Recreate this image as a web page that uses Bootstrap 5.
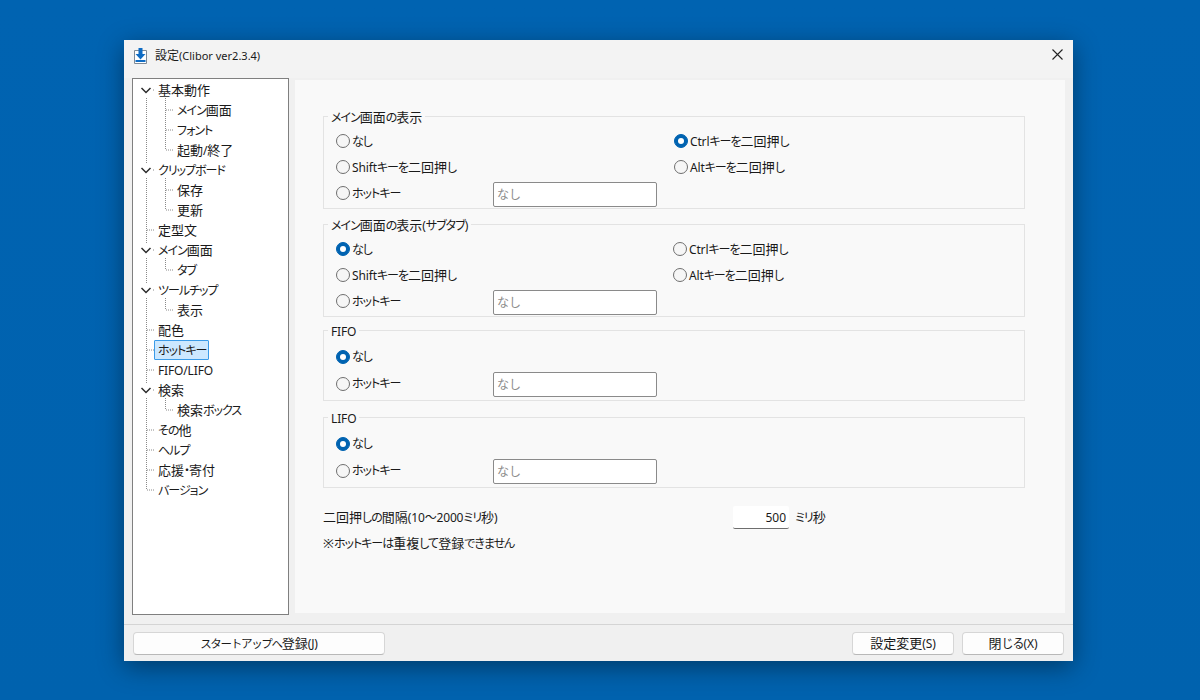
<!DOCTYPE html>
<html lang="ja">
<head>
<meta charset="utf-8">
<title>設定(Clibor ver2.3.4)</title>
<link href="https://cdn.jsdelivr.net/npm/bootstrap@5.3.0/dist/css/bootstrap.min.css" rel="stylesheet">
<style>
html,body{height:100%;}
body{margin:0;background:linear-gradient(180deg,#0063b1 0%,#0062ae 100%);font-family:"Noto Sans","Noto Sans CJK JP",sans-serif;font-size:13px;line-height:18px;color:#1a1a1a;font-feature-settings:"palt";overflow:hidden;padding:40px 127px 39px 124px;}
.kn{font-size:12px;letter-spacing:-1px;}
.lt{font-size:12px;letter-spacing:-.15px;}
.app-win{width:949px;height:621px;background:#f0f0f0;box-shadow:0 6px 24px rgba(0,0,0,.4);}
.app-title{height:38px;background:#f3f3f3;padding:0 10px 7px 9px;font-size:12px;}
.app-title .app-ico{margin-right:7px;}
.app-title .lt{font-size:11px;letter-spacing:0;}
.app-title .app-close{margin-left:auto;margin-bottom:2px;}
.app-main{height:537px;padding:0 8px;gap:6px;}
.app-tree{width:157px;height:537px;flex:none;background:#fff;border:1px solid #7f7f7f;padding-top:1px;position:relative;}
.tree-lines{position:absolute;left:0;top:0;pointer-events:none;}
.tree-row{height:20px;line-height:20px;padding-left:25px;white-space:nowrap;}
.tree-row.lvl2{padding-left:44px;}
.tree-sel{display:inline-block;height:20px;width:55px;line-height:18px;margin-left:-4px;padding:0 3px;background:#cce8ff;border:1px solid #3a9be8;border-radius:1px;}
.app-panel{flex:1;margin:2px 0;background:#f9f9f9;padding:26px 40px 0 28px;}
.grp{border:1px solid #e3e3e3;padding:1px 12px 2px;}
.grp legend{float:none;width:auto;font-size:13px;line-height:18px;margin:0 0 0 -8px;padding:2px 3px 0;}
.grp-a{margin-top:5px;}
.grp-b{margin-top:3px;padding-top:2px;padding-bottom:3px;}
.grp-c{margin-top:6px;padding-top:2px;padding-bottom:3px;}
.opt-row{height:26px;}
.grp-b .opt-row,.grp-c .opt-row{height:27px;}
.grp-b .key-box,.grp-c .key-box{margin-top:2px;}
.opt-left{width:338px;flex:none;}
.grp-a .opt-left{width:337px;}
.opt-label{width:157px;flex:none;}
.opt-pick{gap:2px;}
.opt-pick .form-check-input{width:14px;height:14px;margin:0;background-color:#f6f6f6;border:1px solid #6f6f6f;flex:none;}
.opt-pick .form-check-input:checked{background-color:#0063b1;border-color:#0063b1;}
.opt-pick .form-check-label{white-space:nowrap;}
.key-box{width:164px;height:25px;min-height:25px;margin-top:3px;border:1px solid #8a8a8a;border-radius:2px;padding:0 3px;font-size:12px;line-height:23px;background:#fff;}
.key-box::placeholder{color:#8c8c8c;}
.num-line{margin-top:18px;height:23px;}
.num-text{width:410px;flex:none;}
.num-box{width:56px;height:23px;border:0;border-bottom:1px solid #6e6e6e;border-radius:2px;background:#fff;text-align:right;padding:0 3px;font-size:12px;color:#1a1a1a;margin-right:6px;}
.note-line{margin-top:5px;}
.app-foot{height:37px;margin-top:9px;border-top:1px solid #d4d4d4;padding:7px 9px 0;}
.foot-btn{height:23px;background:#fdfdfd;border:1px solid #d6d6d6;border-bottom-color:#b8b8b8;border-radius:4px;padding:0;font-size:13px;line-height:20px;color:#1a1a1a;}
.foot-wide{width:252px;}
.foot-wide .kn{font-size:11.5px;letter-spacing:-1.3px;}
.foot-mid{width:102px;margin-left:auto;}
.foot-end{width:102px;margin-left:8px;}
</style>
</head>
<body>
<div class="app-win d-flex flex-column">
  <div class="app-title d-flex align-items-center">
    <svg class="app-ico" width="15" height="16" viewBox="0 0 15 16"><path d="M1.500 2.500h12v13h-12z" fill="#fff" stroke="#7f8a96"/><path d="M5.500 0h4v6h3L7.500 11.500 2.500 6h3z" fill="#0f6cc4"/><path d="M2.500 13h10" stroke="#0f6cc4" stroke-width="2"/></svg>
    <span>設定<span class="lt">(Clibor ver2.3.4)</span></span>
    <svg class="app-close" width="11" height="11" viewBox="0 0 11 11"><path d="M.5.5l10 10M10.500.5l-10 10" stroke="#222" stroke-width="1.100" fill="none"/></svg>
  </div>
  <div class="app-main d-flex">
    <div class="app-tree">
      <svg class="tree-lines" width="155" height="535" viewBox="0 0 155 535">
        <g stroke="#8a8a8a" stroke-dasharray="1 1" fill="none">
          <path d="M13.500 19V85M13.500 99V165M13.500 179V205M13.500 219V305M13.500 319V411"/>
          <path d="M32.500 19V71M32.500 99V131M32.500 179V191M32.500 219V231M32.500 319V331"/>
          <path d="M33 31H40M33 51H40M33 71H40M33 111H40M33 131H40M33 191H40M33 231H40M33 331H40"/>
          <path d="M14 151H21M14 251H21M14 271H21M14 291H21M14 351H21M14 371H21M14 391H21M14 411H21"/>
          <path d="M20 11H22M20 91H22M20 171H22M20 211H22M20 311H22"/>
        </g>
        <g stroke="#2b2b2b" stroke-width="1.500" fill="none">
          <path d="M8.500 9l4.500 4.500L17.500 9"/><path d="M8.500 89l4.500 4.500L17.500 89"/><path d="M8.500 169l4.500 4.500L17.500 169"/><path d="M8.500 209l4.500 4.500L17.500 209"/><path d="M8.500 309l4.500 4.500L17.500 309"/>
        </g>
      </svg>
      <div class="tree-row">基本動作</div>
      <div class="tree-row lvl2"><span class="kn">メイン</span>画面</div>
      <div class="tree-row lvl2"><span class="kn">フォント</span></div>
      <div class="tree-row lvl2">起動<span class="lt">/</span>終了</div>
      <div class="tree-row"><span class="kn">クリップボード</span></div>
      <div class="tree-row lvl2">保存</div>
      <div class="tree-row lvl2">更新</div>
      <div class="tree-row">定型文</div>
      <div class="tree-row"><span class="kn">メイン</span>画面</div>
      <div class="tree-row lvl2"><span class="kn">タブ</span></div>
      <div class="tree-row"><span class="kn">ツールチップ</span></div>
      <div class="tree-row lvl2">表示</div>
      <div class="tree-row">配色</div>
      <div class="tree-row"><span class="tree-sel"><span class="kn">ホットキー</span></span></div>
      <div class="tree-row"><span class="lt">FIFO/LIFO</span></div>
      <div class="tree-row">検索</div>
      <div class="tree-row lvl2">検索<span class="kn">ボックス</span></div>
      <div class="tree-row"><span class="kn">その</span>他</div>
      <div class="tree-row"><span class="kn">ヘルプ</span></div>
      <div class="tree-row">応援<span class="kn">・</span>寄付</div>
      <div class="tree-row"><span class="kn">バージョン</span></div>
    </div>
    <div class="app-panel">
      <fieldset class="grp">
        <legend><span class="kn">メイン</span>画面<span class="kn">の</span>表示</legend>
        <div class="opt-row d-flex align-items-center">
          <div class="opt-left"><div class="opt-pick d-flex align-items-center"><input class="form-check-input" type="radio" name="g1"><label class="form-check-label"><span class="kn">なし</span></label></div></div>
          <div class="opt-pick d-flex align-items-center"><input class="form-check-input" type="radio" name="g1" checked><label class="form-check-label"><span class="lt">Ctrl</span><span class="kn">キーを</span>二回押<span class="kn">し</span></label></div>
        </div>
        <div class="opt-row d-flex align-items-center">
          <div class="opt-left"><div class="opt-pick d-flex align-items-center"><input class="form-check-input" type="radio" name="g1"><label class="form-check-label"><span class="lt">Shift</span><span class="kn">キーを</span>二回押<span class="kn">し</span></label></div></div>
          <div class="opt-pick d-flex align-items-center"><input class="form-check-input" type="radio" name="g1"><label class="form-check-label"><span class="lt">Alt</span><span class="kn">キーを</span>二回押<span class="kn">し</span></label></div>
        </div>
        <div class="opt-row d-flex align-items-center">
          <div class="opt-label opt-pick d-flex align-items-center"><input class="form-check-input" type="radio" name="g1"><label class="form-check-label"><span class="kn">ホットキー</span></label></div>
          <input class="key-box form-control" placeholder="なし">
        </div>
      </fieldset>
      <fieldset class="grp grp-a">
        <legend><span class="kn">メイン</span>画面<span class="kn">の</span>表示<span class="lt">(</span><span class="kn">サブタブ</span><span class="lt">)</span></legend>
        <div class="opt-row d-flex align-items-center">
          <div class="opt-left"><div class="opt-pick d-flex align-items-center"><input class="form-check-input" type="radio" name="g2" checked><label class="form-check-label"><span class="kn">なし</span></label></div></div>
          <div class="opt-pick d-flex align-items-center"><input class="form-check-input" type="radio" name="g2"><label class="form-check-label"><span class="lt">Ctrl</span><span class="kn">キーを</span>二回押<span class="kn">し</span></label></div>
        </div>
        <div class="opt-row d-flex align-items-center">
          <div class="opt-left"><div class="opt-pick d-flex align-items-center"><input class="form-check-input" type="radio" name="g2"><label class="form-check-label"><span class="lt">Shift</span><span class="kn">キーを</span>二回押<span class="kn">し</span></label></div></div>
          <div class="opt-pick d-flex align-items-center"><input class="form-check-input" type="radio" name="g2"><label class="form-check-label"><span class="lt">Alt</span><span class="kn">キーを</span>二回押<span class="kn">し</span></label></div>
        </div>
        <div class="opt-row d-flex align-items-center">
          <div class="opt-label opt-pick d-flex align-items-center"><input class="form-check-input" type="radio" name="g2"><label class="form-check-label"><span class="kn">ホットキー</span></label></div>
          <input class="key-box form-control" placeholder="なし">
        </div>
      </fieldset>
      <fieldset class="grp grp-b">
        <legend><span class="lt">FIFO</span></legend>
        <div class="opt-row d-flex align-items-center">
          <div class="opt-pick d-flex align-items-center"><input class="form-check-input" type="radio" name="g3" checked><label class="form-check-label"><span class="kn">なし</span></label></div>
        </div>
        <div class="opt-row d-flex align-items-center">
          <div class="opt-label opt-pick d-flex align-items-center"><input class="form-check-input" type="radio" name="g3"><label class="form-check-label"><span class="kn">ホットキー</span></label></div>
          <input class="key-box form-control" placeholder="なし">
        </div>
      </fieldset>
      <fieldset class="grp grp-c">
        <legend><span class="lt">LIFO</span></legend>
        <div class="opt-row d-flex align-items-center">
          <div class="opt-pick d-flex align-items-center"><input class="form-check-input" type="radio" name="g4" checked><label class="form-check-label"><span class="kn">なし</span></label></div>
        </div>
        <div class="opt-row d-flex align-items-center">
          <div class="opt-label opt-pick d-flex align-items-center"><input class="form-check-input" type="radio" name="g4"><label class="form-check-label"><span class="kn">ホットキー</span></label></div>
          <input class="key-box form-control" placeholder="なし">
        </div>
      </fieldset>
      <div class="num-line d-flex align-items-center">
        <div class="num-text">二回押<span class="kn">しの</span>間隔<span class="lt">(10～2000</span><span class="kn">ミリ</span>秒<span class="lt">)</span></div>
        <input class="num-box" value="500">
        <span><span class="kn">ミリ</span>秒</span>
      </div>
      <div class="note-line">※<span class="kn">ホットキーは</span>重複<span class="kn">して</span>登録<span class="kn">できません</span></div>
    </div>
  </div>
  <div class="app-foot d-flex">
    <button type="button" class="btn foot-btn foot-wide"><span class="kn">スタートアップへ</span>登録<span class="lt">(J)</span></button>
    <button type="button" class="btn foot-btn foot-mid">設定変更<span class="lt">(S)</span></button>
    <button type="button" class="btn foot-btn foot-end">閉<span class="kn">じる</span><span class="lt">(X)</span></button>
  </div>
</div>
</body>
</html>
